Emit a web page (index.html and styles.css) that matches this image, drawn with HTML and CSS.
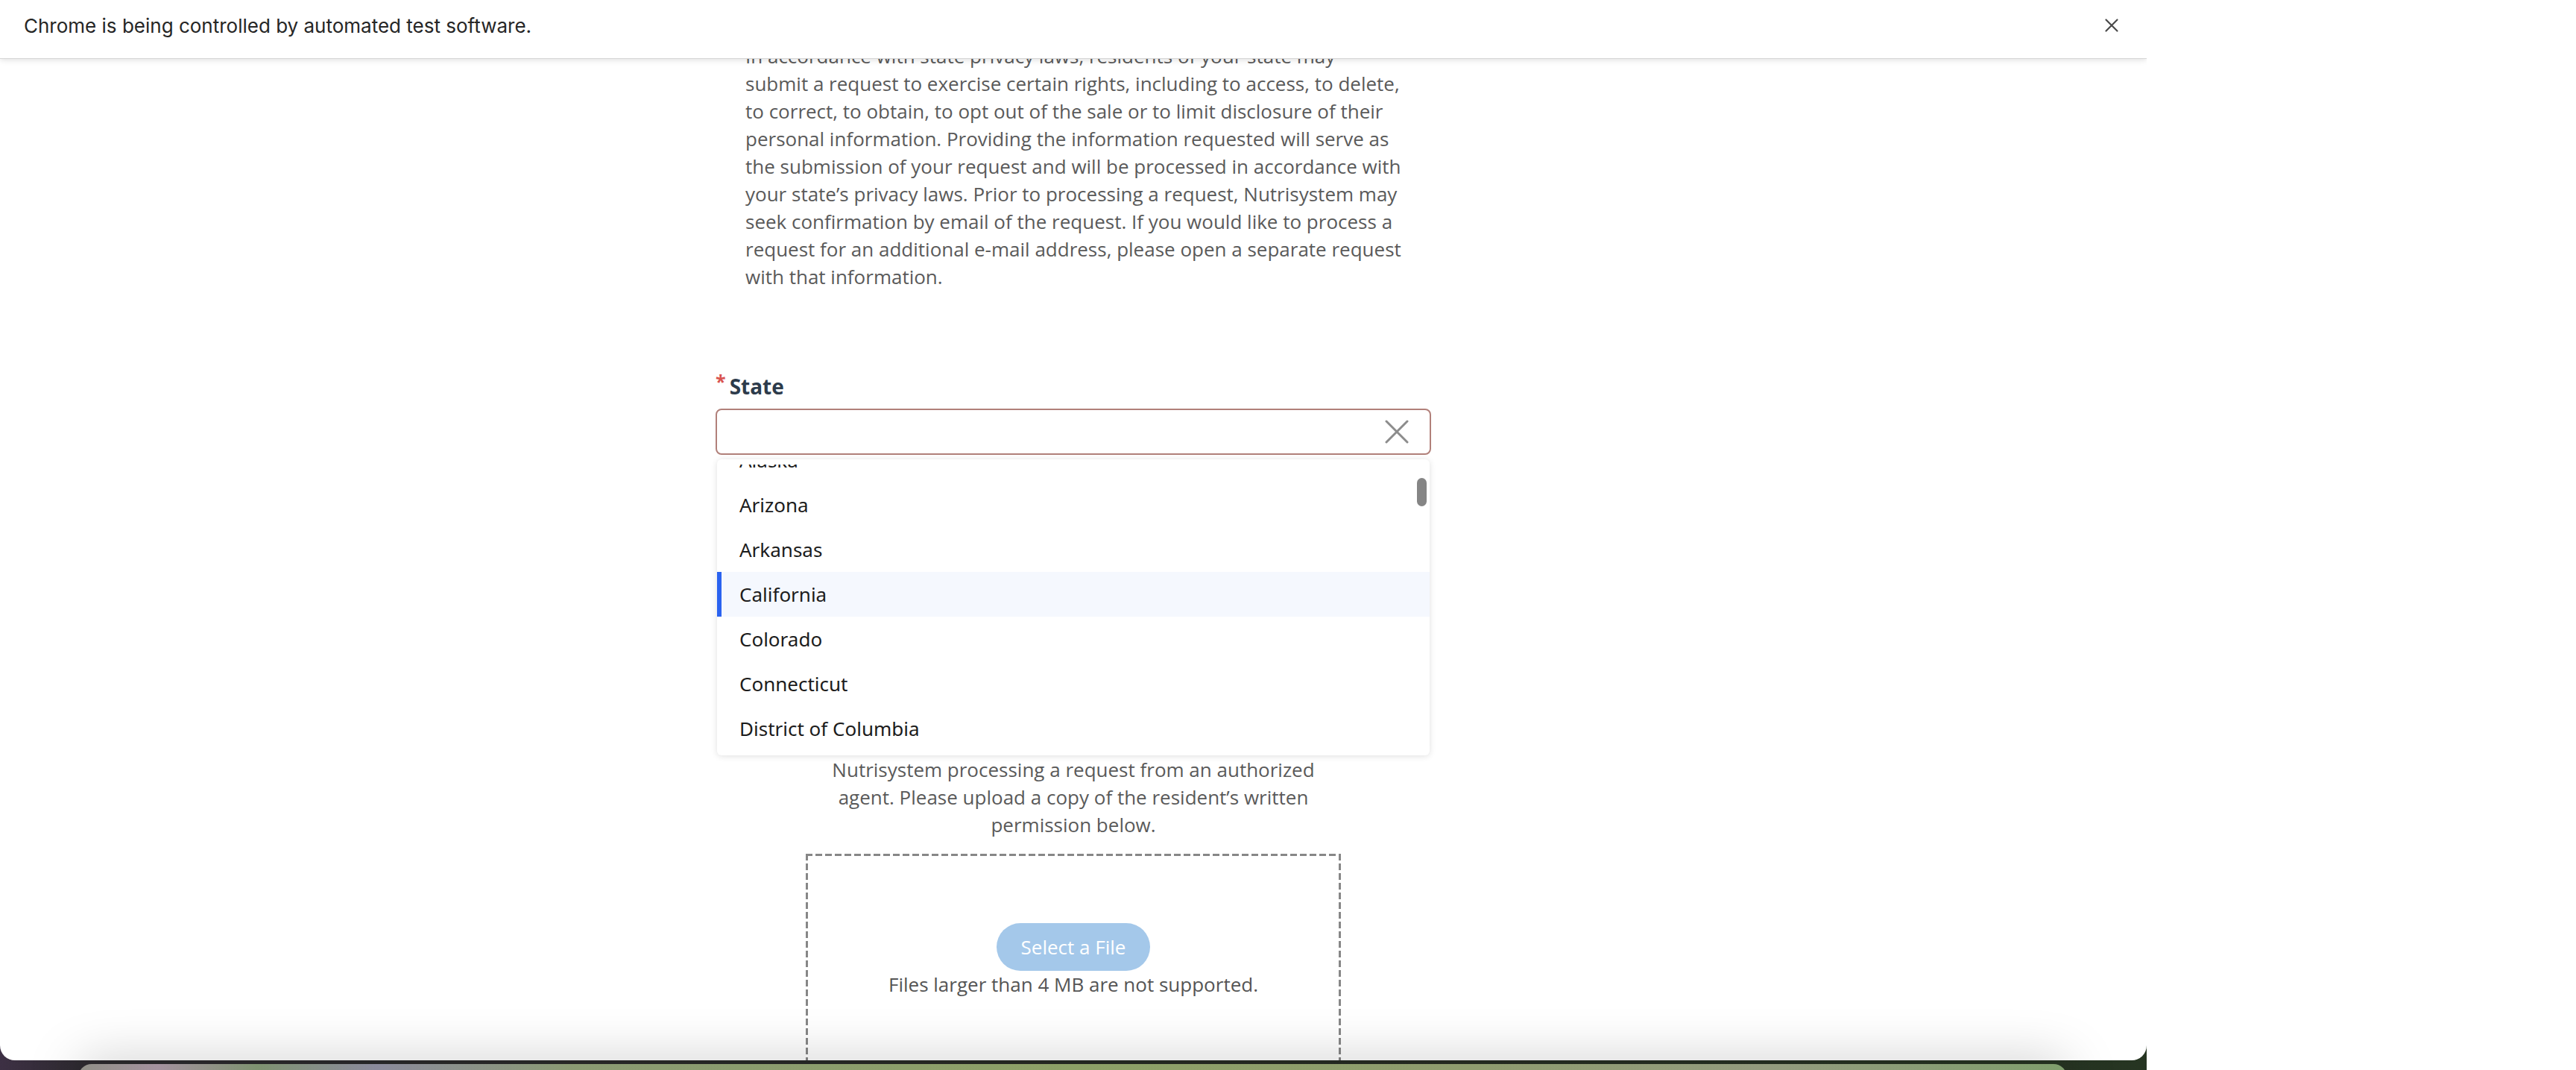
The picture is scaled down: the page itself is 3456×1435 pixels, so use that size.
FILE: index.html
```html
<!DOCTYPE html>
<html lang="en">
<head>
<meta charset="utf-8">
<title>Privacy Request</title>
<link rel="stylesheet" href="styles.css">
</head>
<body>
<div class="screen">
  <div class="desk">
    <div class="window">
      <div class="infobar">
        <span class="infobar-text">Chrome is being controlled by automated test software.</span>
        <span class="infobar-close" aria-label="Close">
          <svg viewBox="0 0 20 20" width="20" height="20"><path d="M2.5 2.5 L17.5 17.5 M17.5 2.5 L2.5 17.5" stroke="#4a4a4a" stroke-width="2.2" stroke-linecap="round" fill="none"/></svg>
        </span>
      </div>
      <div class="viewport">
        <main class="page">
          <div class="form">
            <p class="intro">In accordance with state privacy laws, residents of your state may<br>submit a request to exercise certain rights, including to access, to delete,<br>to correct, to obtain, to opt out of the sale or to limit disclosure of their<br>personal information. Providing the information requested will serve as<br>the submission of your request and will be processed in accordance with<br>your state’s privacy laws. Prior to processing a request, Nutrisystem may<br>seek confirmation by email of the request. If you would like to process a<br>request for an additional e-mail address, please open a separate request<br>with that information.</p>
            <div class="field">
              <div class="label"><span class="req">*</span>State</div>
              <div class="combo">
                <div class="input">
                  <svg class="clear" viewBox="0 0 32 32" width="32" height="32"><path d="M2 2 L30 30 M30 2 L2 30" stroke="#8c8c8c" stroke-width="3" stroke-linecap="round" fill="none"/></svg>
                </div>
                <div class="menu">
                  <div class="scroller">
                    <ul class="options">
                      <li>Alaska</li>
                      <li>Arizona</li>
                      <li>Arkansas</li>
                      <li class="active">California</li>
                      <li>Colorado</li>
                      <li>Connecticut</li>
                      <li>District of Columbia</li>
                      <li>Florida</li>
                    </ul>
                  </div>
                  <div class="thumb"></div>
                </div>
              </div>
              <div class="covered"></div>
            </div>
            <p class="agent">Nutrisystem processing a request from an authorized<br>agent. Please upload a copy of the resident’s written<br>permission below.</p>
            <div class="upload">
              <button class="select" type="button">Select a File</button>
              <p class="note">Files larger than 4 MB are not supported.</p>
            </div>
          </div>
        </main>
      </div>
    </div>
    <div class="strip"><div class="dock"></div></div>
  </div>
</div>
</body>
</html>
```

FILE: styles.css
```css
html, body {
  margin: 0;
  padding: 0;
}
body {
  width: 3456px;
  height: 1435px;
  overflow: hidden;
  background: #ffffff;
  font-family: "Open Sans", "Noto Sans", sans-serif;
}
.screen {
  display: flex;
  width: 3456px;
  height: 1435px;
}
.desk {
  flex: none;
  width: 2880px;
  height: 1435px;
  display: flex;
  flex-direction: column;
  overflow: hidden;
  background: linear-gradient(90deg, #3d3044 0, #2d2a2f 4%, #272a24 50%, #263522 100%);
}
.window {
  flex: none;
  height: 1422px;
  display: flex;
  flex-direction: column;
  background: #ffffff;
  border-radius: 0 0 20px 20px;
  overflow: hidden;
  position: relative;
}
.infobar {
  flex: none;
  height: 78px;
  box-sizing: border-box;
  display: flex;
  align-items: center;
  justify-content: space-between;
  padding: 0 37px 10px 32px;
  background: #ffffff;
  position: relative;
  z-index: 2;
  box-shadow: 0 1px 0 #d6d6d6, 0 2px 8px rgba(0, 0, 0, 0.14);
}
.infobar-text {
  font-family: "Inter", "Liberation Sans", sans-serif;
  font-size: 26px;
  color: #262626;
}
.infobar-close {
  display: flex;
  width: 20px;
  height: 20px;
}
.viewport {
  flex: 1;
  overflow: hidden;
  position: relative;
}
.page {
  margin-top: -21px;
}
.form {
  width: 960px;
  margin: 0 auto;
}
.intro {
  margin: 0 0 102px;
  padding-left: 40px;
  font-size: 26px;
  line-height: 37px;
  color: #5a5a5a;
  white-space: nowrap;
}
.label {
  font-size: 28px;
  line-height: 38px;
  font-weight: 700;
  color: #2d3b4b;
  margin-bottom: 11px;
}
.req {
  color: #d9534f;
  font-size: 25px;
  vertical-align: 8px;
  margin-right: 5px;
}
.combo {
  position: relative;
}
.input {
  height: 62px;
  box-sizing: border-box;
  border: 2px solid #b1807a;
  border-radius: 8px;
  display: flex;
  align-items: center;
  justify-content: flex-end;
  padding-right: 28px;
  background: #ffffff;
}
.menu {
  position: absolute;
  left: 2px;
  right: 2px;
  top: 68px;
  height: 397px;
  box-sizing: border-box;
  padding: 7px 0 6px;
  background: #ffffff;
  border-radius: 6px;
  box-shadow: 0 1px 8px rgba(0, 0, 0, 0.13);
  z-index: 3;
}
.scroller {
  height: 100%;
  overflow: hidden;
}
.options {
  list-style: none;
  margin: -36px 0 0;
  padding: 0;
}
.options li {
  height: 60px;
  line-height: 60px;
  padding-left: 30px;
  font-family: "Noto Sans", "Open Sans", sans-serif;
  font-size: 26px;
  color: #1c1c1c;
}
.options li.active {
  background: #f5f8fe;
  box-shadow: inset 6px 0 0 #2b63f0;
}
.thumb {
  position: absolute;
  top: 25px;
  right: 4px;
  width: 13px;
  height: 38px;
  border-radius: 7px;
  background: #858585;
}
.covered {
  height: 404px;
}
.agent {
  margin: 0;
  text-align: center;
  font-size: 26px;
  line-height: 37px;
  color: #5a5a5a;
}
.upload {
  width: 718px;
  height: 420px;
  box-sizing: border-box;
  margin: 20px auto 0;
  padding-top: 93px;
  display: flex;
  flex-direction: column;
  align-items: center;
  background:
    repeating-linear-gradient(90deg, #878787 0 9px, transparent 9px 13px) left top / 100% 3px no-repeat,
    repeating-linear-gradient(180deg, #878787 0 9px, transparent 9px 13px) left top / 3px 100% no-repeat,
    repeating-linear-gradient(180deg, #878787 0 9px, transparent 9px 13px) right top / 3px 100% no-repeat;
}
.select {
  height: 64px;
  padding: 0 33px;
  border: none;
  border-radius: 32px;
  background: #a4c8ea;
  color: #ffffff;
  font-family: "Open Sans", sans-serif;
  font-size: 26px;
}
.note {
  margin: 0;
  font-size: 26px;
  line-height: 37px;
  color: #555555;
}
.strip {
  flex: 1;
  padding: 5px 107px 0 105px;
  position: relative;
  z-index: 1;
}
.dock {
  height: 40px;
  border-radius: 18px 18px 0 0;
  background: linear-gradient(90deg, #8f8f86 0%, #a4919f 4%, #7e9270 9%, #8b8a9c 15%, #8a9a72 25%, #8da066 50%, #8e9c6e 70%, #939b7e 85%, #7f9e6c 100%);
  box-shadow: 0 0 70px rgba(0, 0, 0, 0.26);
}
```
